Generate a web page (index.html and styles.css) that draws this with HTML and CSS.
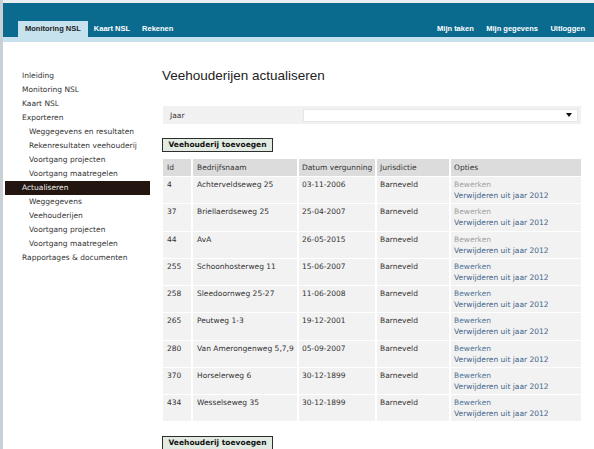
FILE: index.html
```html
<!DOCTYPE html>
<html lang="nl">
<head>
<meta charset="utf-8">
<title>Veehouderijen actualiseren</title>
<link rel="stylesheet" href="styles.css">
</head>
<body>
<div class="topline"></div>
<header class="header">
  <nav class="tabs">
    <a class="tab active">Monitoring NSL</a>
    <a class="tab">Kaart NSL</a>
    <a class="tab">Rekenen</a>
  </nav>
  <nav class="userlinks">
    <a class="ulink">Mijn taken</a>
    <a class="ulink">Mijn gegevens</a>
    <a class="ulink">Uitloggen</a>
  </nav>
</header>
<div class="strip"></div>
<div class="main">
  <aside class="sidebar">
    <a class="item">Inleiding</a>
    <a class="item">Monitoring NSL</a>
    <a class="item">Kaart NSL</a>
    <a class="item">Exporteren</a>
    <a class="item sub">Weggegevens en resultaten</a>
    <a class="item sub">Rekenresultaten veehouderij</a>
    <a class="item sub">Voortgang projecten</a>
    <a class="item sub">Voortgang maatregelen</a>
    <a class="item current">Actualiseren</a>
    <a class="item sub">Weggegevens</a>
    <a class="item sub">Veehouderijen</a>
    <a class="item sub">Voortgang projecten</a>
    <a class="item sub">Voortgang maatregelen</a>
    <a class="item">Rapportages &amp; documenten</a>
  </aside>
  <section class="content">
    <h1 class="title">Veehouderijen actualiseren</h1>
    <div class="filter">
      <span class="filter-label">Jaar</span>
      <div class="select">
        <svg class="arrow" width="6" height="4" viewBox="0 0 6 4"><path d="M0 0H6L3 4Z" fill="#111"/></svg>
      </div>
    </div>
    <button class="btn">Veehouderij toevoegen</button>
    <table class="grid">
      <thead>
        <tr><th class="c-id">Id</th><th class="c-name">Bedrijfsnaam</th><th class="c-date">Datum vergunning</th><th class="c-jur">Jurisdictie</th><th class="c-opt">Opties</th></tr>
      </thead>
      <tbody>
        <tr><td>4</td><td>Achterveldseweg 25</td><td>03-11-2006</td><td>Barneveld</td><td><a class="edit disabled">Bewerken</a><a class="del">Verwijderen uit jaar 2012</a></td></tr>
        <tr><td>37</td><td>Briellaerdseweg 25</td><td>25-04-2007</td><td>Barneveld</td><td><a class="edit disabled">Bewerken</a><a class="del">Verwijderen uit jaar 2012</a></td></tr>
        <tr><td>44</td><td>AvA</td><td>26-05-2015</td><td>Barneveld</td><td><a class="edit disabled">Bewerken</a><a class="del">Verwijderen uit jaar 2012</a></td></tr>
        <tr><td>255</td><td>Schoonhosterweg 11</td><td>15-06-2007</td><td>Barneveld</td><td><a class="edit">Bewerken</a><a class="del">Verwijderen uit jaar 2012</a></td></tr>
        <tr><td>258</td><td>Sleedoornweg 25-27</td><td>11-06-2008</td><td>Barneveld</td><td><a class="edit">Bewerken</a><a class="del">Verwijderen uit jaar 2012</a></td></tr>
        <tr><td>265</td><td>Peutweg 1-3</td><td>19-12-2001</td><td>Barneveld</td><td><a class="edit">Bewerken</a><a class="del">Verwijderen uit jaar 2012</a></td></tr>
        <tr><td>280</td><td>Van Amerongenweg 5,7,9</td><td>05-09-2007</td><td>Barneveld</td><td><a class="edit">Bewerken</a><a class="del">Verwijderen uit jaar 2012</a></td></tr>
        <tr><td>370</td><td>Horselerweg 6</td><td>30-12-1899</td><td>Barneveld</td><td><a class="edit">Bewerken</a><a class="del">Verwijderen uit jaar 2012</a></td></tr>
        <tr><td>434</td><td>Wesselseweg 35</td><td>30-12-1899</td><td>Barneveld</td><td><a class="edit">Bewerken</a><a class="del">Verwijderen uit jaar 2012</a></td></tr>
      </tbody>
    </table>
    <button class="btn btn-bottom">Veehouderij toevoegen</button>
  </section>
</div>
</body>
</html>
```

FILE: styles.css
```css
html, body {
  margin: 0;
  padding: 0;
}
body {
  height: 449px;
  overflow: hidden;
  box-sizing: border-box;
  border-left: 3px solid #c9d1d6;
  background: #ffffff;
  font-family: "DejaVu Sans", Verdana, sans-serif;
  font-size: 7.5px;
  color: #333333;
}
.topline {
  height: 3px;
  background: #e9eef1;
}
.header {
  height: 34px;
  background: #0b6b8f;
  display: flex;
  justify-content: space-between;
  align-items: flex-end;
  padding-left: 15px;
}
.tabs {
  display: flex;
}
.tab, .ulink {
  font-family: "Liberation Sans", Arial, sans-serif;
  font-weight: bold;
  font-size: 7.5px;
  line-height: 16px;
  height: 16px;
  color: #ffffff;
}
.tab {
  padding: 0 6px;
}
.tab.active {
  background: #c6e2ef;
  color: #1d1d1d;
  padding: 0 7px;
}
.userlinks {
  display: flex;
  gap: 12.5px;
  padding-right: 9px;
}
.strip {
  height: 5px;
  background: #c6e2ef;
}
.main {
  display: flex;
}
.sidebar {
  width: 145px;
  margin-left: 2px;
  padding-top: 27px;
  display: flex;
  flex-direction: column;
}
.item {
  height: 14px;
  line-height: 14px;
  padding-left: 17px;
  color: #333333;
  white-space: nowrap;
}
.item.sub {
  padding-left: 24px;
}
.item.current {
  background: #23150f;
  color: #eeeeee;
}
.content {
  margin-left: 12px;
  padding-top: 26px;
  display: flex;
  flex-direction: column;
  align-items: flex-start;
}
.title {
  margin: 0;
  font-family: "Liberation Sans", Arial, sans-serif;
  font-weight: normal;
  font-size: 13.5px;
  line-height: 16px;
  color: #222222;
}
.filter {
  margin-top: 22px;
  margin-left: 1px;
  width: 418px;
  height: 18px;
  background: #f1f1f1;
  display: flex;
  align-items: center;
}
.filter-label {
  width: 133px;
  padding-left: 7px;
}
.select {
  width: 268px;
  height: 11px;
  background: #ffffff;
  border: 1px solid #e6e6e6;
  display: flex;
  align-items: center;
  justify-content: flex-end;
  padding-right: 5px;
  box-sizing: content-box;
}
.btn {
  margin-top: 14px;
  height: 14px;
  padding: 0 5px;
  border: 1px solid #2e2e2e;
  background: #e2ebe2;
  font-family: "DejaVu Sans", Verdana, sans-serif;
  font-weight: bold;
  font-size: 7.5px;
  line-height: 12px;
  color: #111111;
  width: 111px;
  text-align: center;
}
.btn-bottom {
  margin-top: 14px;
}
.grid {
  margin-top: 6px;
  margin-left: -1px;
  width: 422px;
  table-layout: fixed;
  border-collapse: separate;
  border-spacing: 2px 1px;
}
.grid th, .grid td {
  box-sizing: border-box;
  text-align: left;
  vertical-align: top;
  font-weight: normal;
  line-height: 11px;
  white-space: nowrap;
}
.grid th {
  background: #dcdcdc;
  padding: 3px 3px 2px;
  height: 17px;
}
.grid td {
  background: #f2f2f2;
  padding: 2px 3px 2px;
  height: 26.25px;
}
.grid th:first-child, .grid td:first-child {
  padding-left: 4px;
}
.grid th:nth-child(2), .grid td:nth-child(2) {
  padding-left: 4px;
}
.c-id { width: 28px; }
.c-name { width: 104px; }
.c-date { width: 76px; }
.c-jur { width: 72px; }
.c-opt { width: 130px; }
.edit, .del {
  display: block;
}
.edit {
  color: #4f7499;
}
.edit.disabled {
  color: #a0a0a0;
}
.del {
  color: #3e6389;
}
```
